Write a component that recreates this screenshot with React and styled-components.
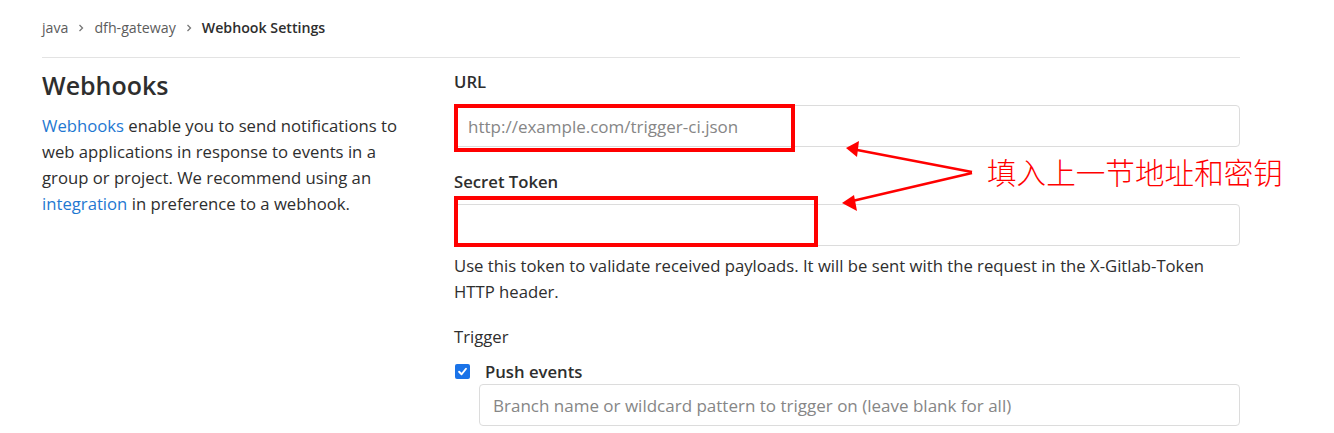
import {createGlobalStyle, styled} from "styled-components";

const GlobalStyle = createGlobalStyle`
  body {
    margin: 0;
    background: #fff;
    font-family: "Open Sans", "Noto Sans", "Noto Sans CJK SC", sans-serif;
    color: #2e2e2e;
  }
`

const Chevron = () => (
    <svg width="8" height="10" viewBox="0 0 8 10">
        <path d="M2.5 2 L5.5 5 L2.5 8" fill="none" stroke="#777" strokeWidth="1.3"/>
    </svg>
);

const Check = () => (
    <svg width="11" height="11" viewBox="0 0 12 12">
        <path d="M2.3 6.3 L5 9 L9.8 3" fill="none" stroke="#fff" strokeWidth="2.1"
              strokeLinecap="round" strokeLinejoin="round"/>
    </svg>
);

export default function App() {
    return (
        <>
            <GlobalStyle/>
            <Page>
                <Breadcrumbs>
                    <Crumb>java</Crumb>
                    <Chevron/>
                    <Crumb>dfh-gateway</Crumb>
                    <Chevron/>
                    <Crumb $current>Webhook Settings</Crumb>
                </Breadcrumbs>
                <Row>
                    <Sidebar>
                        <Heading>Webhooks</Heading>
                        <Intro>
                            <Link>Webhooks</Link> enable you to send notifications to web applications in
                            response to events in a group or project. We recommend using an{" "}
                            <Link>integration</Link> in preference to a webhook.
                        </Intro>
                    </Sidebar>
                    <Form>
                        <Label>URL</Label>
                        <Input placeholder="http://example.com/trigger-ci.json"/>
                        <Label $gap={23} $after={10}>Secret Token</Label>
                        <Input/>
                        <Help>
                            Use this token to validate received payloads. It will be sent with the request
                            in the X-Gitlab-Token HTTP header.
                        </Help>
                        <Label $gap={20} $after={10} $weight={500}>Trigger</Label>
                        <CheckRow>
                            <CheckBox><Check/></CheckBox>
                            <CheckLabel>Push events</CheckLabel>
                        </CheckRow>
                        <Input $indent placeholder="Branch name or wildcard pattern to trigger on (leave blank for all)"/>
                    </Form>
                </Row>

                <RedBox style={{left: 454, top: 104, width: 341, height: 48}}/>
                <RedBox style={{left: 454, top: 196, width: 364, height: 51}}/>
                <Arrows width="1334" height="433">
                    <ArrowLine x1="972" y1="172" x2="852" y2="149"/>
                    <ArrowLine x1="972" y1="173" x2="848" y2="202"/>
                    <path d="M859 141 L846 148 L857 157 z" fill="#f00"/>
                    <path d="M854 195 L842 203 L857 211 z" fill="#f00"/>
                </Arrows>
                <Note>填入上一节地址和密钥</Note>
            </Page>
        </>
    );
}

const Page = styled.div`
  position: relative;
  box-sizing: border-box;
  width: 1334px;
  height: 433px;
  padding: 0 94px 0 42px;
  overflow: hidden;
`

const Breadcrumbs = styled.div`
  display: flex;
  align-items: center;
  gap: 9px;
  height: 58px;
  border-bottom: 1px solid #e3e3e3;
  box-sizing: border-box;
  padding-bottom: 2px;
`

const Crumb = styled.span`
  font-size: 14.2px;
  color: ${p => p.$current ? "#2e2e2e" : "#5c5c5c"};
  font-weight: ${p => p.$current ? 600 : 400};
`

const Row = styled.div`
  display: flex;
`

const Sidebar = styled.div`
  width: 412px;
  flex-shrink: 0;
  padding-top: 11px;
`

const Heading = styled.h2`
  margin: 0 0 12px;
  font-size: 25px;
  line-height: 32px;
  font-weight: 600;
  color: #2e2e2e;
`

const Intro = styled.p`
  margin: 0;
  width: 366px;
  font-size: 16.7px;
  line-height: 26px;
  color: #2e2e2e;
`

const Link = styled.span`
  color: #1f78d1;
`

const Form = styled.div`
  flex: 1;
  display: flex;
  flex-direction: column;
  padding-top: 12px;
`

const Label = styled.label`
  font-size: 16.7px;
  line-height: 24px;
  font-weight: ${p => p.$weight || 600};
  margin-top: ${p => p.$gap || 0}px;
  margin-bottom: ${p => p.$after || 11}px;
`

const Input = styled.input`
  box-sizing: border-box;
  height: 42px;
  margin-left: ${p => p.$indent ? 25 : 0}px;
  border: 1px solid #dcdcdc;
  border-radius: 4px;
  padding: 0 13px;
  font-family: inherit;
  font-size: 17px;
  color: #2e2e2e;
  outline: none;

  &::placeholder {
    color: #868686;
  }
`

const Help = styled.p`
  margin: 7px 0 0;
  max-width: 760px;
  font-size: 16.7px;
  line-height: 26px;
  color: #2e2e2e;
`

const CheckRow = styled.div`
  display: flex;
  align-items: center;
  gap: 15px;
  height: 24px;
  margin-bottom: 1px;
`

const CheckBox = styled.span`
  width: 15px;
  height: 15px;
  margin-left: 1px;
  border-radius: 2px;
  background: #1a73e8;
  display: flex;
  align-items: center;
  justify-content: center;
`

const CheckLabel = styled.span`
  font-size: 16.7px;
  font-weight: 600;
`

const RedBox = styled.div`
  position: absolute;
  box-sizing: border-box;
  border: 4px solid #f00;
`

const Arrows = styled.svg`
  position: absolute;
  left: 0;
  top: 0;
  pointer-events: none;
`

const ArrowLine = styled.line`
  stroke: #f00;
  stroke-width: 2.5;
`

const Note = styled.div`
  position: absolute;
  left: 987px;
  top: 152px;
  white-space: nowrap;
  font-family: "Noto Sans CJK SC", sans-serif;
  font-weight: 300;
  font-size: 29.6px;
  line-height: 40px;
  color: #f00;
`
